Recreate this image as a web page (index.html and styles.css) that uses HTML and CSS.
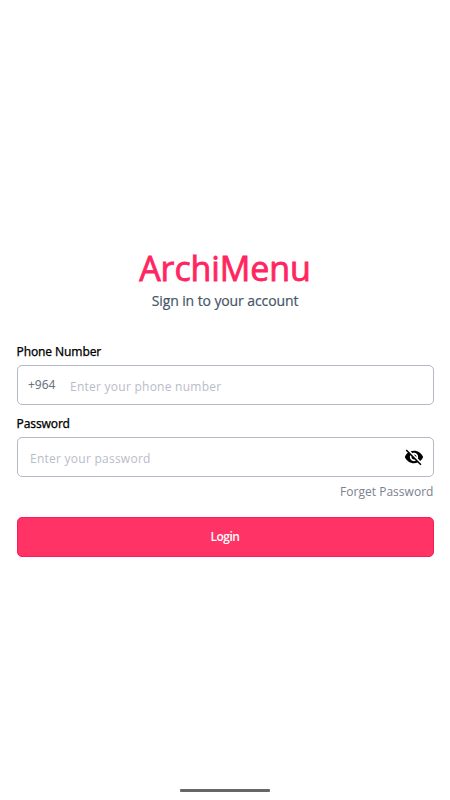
FILE: index.html
```html
<!DOCTYPE html>
<html lang="en">
<head>
<meta charset="utf-8">
<title>ArchiMenu</title>
<link rel="stylesheet" href="styles.css">
</head>
<body>
<main class="screen">
  <header class="brand">
    <h1 class="brand-name">ArchiMenu</h1>
    <p class="brand-sub">Sign in to your account</p>
  </header>
  <form class="form">
    <label class="label" for="phone">Phone Number</label>
    <div class="field field-phone">
      <span class="prefix">+964</span>
      <input class="input" id="phone" type="tel" placeholder="Enter your phone number">
    </div>
    <label class="label" for="password">Password</label>
    <div class="field">
      <input class="input" id="password" type="password" placeholder="Enter your password">
      <svg class="eye" viewBox="0 0 24 24"><path d="M12 7c2.76 0 5 2.24 5 5 0 .65-.13 1.26-.36 1.83l2.92 2.92c1.51-1.26 2.7-2.89 3.43-4.75-1.73-4.39-6-7.5-11-7.5-1.4 0-2.74.25-3.98.7l2.16 2.16C10.74 7.13 11.35 7 12 7zM2 4.27l2.28 2.28.46.46C3.08 8.3 1.78 10.02 1 12c1.73 4.39 6 7.5 11 7.5 1.55 0 3.03-.3 4.38-.84l.42.42L19.73 22 21 20.73 3.27 3 2 4.27zM7.53 9.8l1.55 1.55c-.05.21-.08.43-.08.65 0 1.66 1.34 3 3 3 .22 0 .44-.03.65-.08l1.55 1.55c-.67.33-1.41.53-2.2.53-2.76 0-5-2.24-5-5 0-.79.2-1.53.53-2.2zm4.31-.78l3.15 3.15.02-.16c0-1.66-1.34-3-3-3l-.17.01z"/></svg>
    </div>
    <a class="forgot">Forget Password</a>
    <button class="login" type="button">Login</button>
  </form>
  <div class="home-bar"></div>
</main>
</body>
</html>
```

FILE: styles.css
```css
* { box-sizing: border-box; }
body {
  margin: 0;
  background: #fff;
  font-family: "Noto Sans", "Open Sans", sans-serif;
}
.screen {
  height: 800px;
  padding: 244px 16.5px 8.5px;
  display: flex;
  flex-direction: column;
}
.brand { text-align: center; }
.brand-name {
  margin: 0;
  color: #ff2560;
  font-family: "Open Sans", sans-serif;
  font-size: 34px;
  line-height: 48px;
  font-weight: 400;
  letter-spacing: -0.1px;
  -webkit-text-stroke: 0.8px #ff2560;
}
.brand-sub {
  margin: 0;
  color: #475569;
  font-family: "Open Sans", sans-serif;
  font-size: 14px;
  line-height: 18px;
  letter-spacing: -0.1px;
  -webkit-text-stroke: 0.2px #475569;
}
.form {
  margin-top: 32px;
  display: flex;
  flex-direction: column;
}
.label {
  height: 20px;
  margin-bottom: 3px;
  color: #000;
  font-size: 12px;
  line-height: 20px;
  letter-spacing: -0.12px;
  -webkit-text-stroke: 0.25px #000;
}
.field {
  height: 40px;
  margin-bottom: 9px;
  padding: 0 9px 0 12.5px;
  display: flex;
  align-items: center;
  border: 1px solid #b5b8c5;
  border-radius: 5px;
}
.field-phone { padding-left: 10.5px; }
.prefix {
  width: 42px;
  color: #6b7280;
  font-size: 12px;
  line-height: 16px;
}
.input {
  flex: 1;
  min-width: 0;
  padding: 2px 0 0;
  border: 0;
  outline: 0;
  background: none;
  font: 400 12px "Open Sans", sans-serif;
  letter-spacing: 0.25px;
}
.input::placeholder { color: #b9bcc9; }
.eye { width: 20px; height: 20px; }
.forgot {
  align-self: flex-end;
  margin-top: -3px;
  color: #7b8190;
  font-family: "Open Sans", sans-serif;
  font-size: 12px;
  line-height: 18px;
  letter-spacing: 0.03px;
}
.login {
  height: 40px;
  margin-top: 16px;
  padding-bottom: 3px;
  border: 1px solid #fb1b56;
  border-radius: 5px;
  background: #ff3366;
  color: #fff;
  font: 600 12px "Open Sans", sans-serif;
  letter-spacing: -0.5px;
}
.home-bar {
  width: 90px;
  height: 3px;
  margin: auto auto 0;
  border-radius: 1px;
  background: #666;
}
```
